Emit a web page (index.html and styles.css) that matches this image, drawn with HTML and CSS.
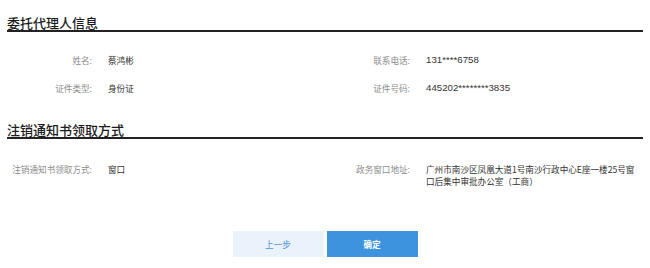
FILE: index.html
```html
<!DOCTYPE html>
<html lang="zh-CN">
<head>
<meta charset="utf-8">
<title>委托代理人信息</title>
<link rel="stylesheet" href="styles.css">
</head>
<body>
<div class="page">
  <h2 class="section-title first">委托代理人信息</h2>
  <div class="info-grid">
    <div class="field"><span class="label">姓名:</span><span class="value">蔡鸿彬</span></div>
    <div class="field"><span class="label">联系电话:</span><span class="value num">131****6758</span></div>
    <div class="field"><span class="label">证件类型:</span><span class="value">身份证</span></div>
    <div class="field"><span class="label">证件号码:</span><span class="value num">445202********3835</span></div>
  </div>
  <h2 class="section-title second">注销通知书领取方式</h2>
  <div class="info-grid second-grid">
    <div class="field"><span class="label">注销通知书领取方式:</span><span class="value">窗口</span></div>
    <div class="field"><span class="label">政务窗口地址:</span><span class="value address">广州市南沙区凤凰大道1号南沙行政中心E座一楼25号窗口后集中审批办公室（工商）</span></div>
  </div>
  <div class="actions">
    <button class="btn btn-prev" type="button">上一步</button>
    <button class="btn btn-ok" type="button">确定</button>
  </div>
</div>
</body>
</html>
```

FILE: styles.css
```css
html, body {
  margin: 0;
  padding: 0;
  background: #ffffff;
}

body {
  font-family: "Noto Sans CJK SC", "Liberation Sans", sans-serif;
}

.page {
  padding: 0 7px;
}

.section-title {
  margin: 0;
  font-size: 13px;
  line-height: 14px;
  font-weight: 500;
  color: #1c1c1c;
  border-bottom: 2px solid #222;
}

.section-title.first {
  margin-top: 16px;
}

.section-title.second {
  margin-top: 29px;
}

.info-grid {
  display: grid;
  grid-template-columns: 318px 318px;
  row-gap: 16px;
  padding-top: 22px;
}

.second-grid {
  padding-top: 24px;
}

.field {
  display: flex;
  align-items: flex-start;
  font-size: 8.6px;
  line-height: 12px;
}

.label {
  flex: 0 0 85px;
  text-align: right;
  color: #8c8c8c;
}

.value {
  margin-left: 16px;
  color: #333333;
}

.num {
  font-family: "Liberation Sans", sans-serif;
  font-size: 9.7px;
}

.address {
  width: 212px;
}

.actions {
  display: flex;
  justify-content: center;
  gap: 3px;
  margin-top: 44px;
}

.btn {
  width: 91px;
  height: 26px;
  border: none;
  padding: 0;
  font-family: "Noto Sans CJK SC", "Liberation Sans", sans-serif;
  font-size: 8.6px;
  cursor: pointer;
}

.btn-prev {
  background: #eaf3fc;
  color: #4b94da;
}

.btn-ok {
  background: #3d93dd;
  color: #ffffff;
  font-weight: 700;
}
```
